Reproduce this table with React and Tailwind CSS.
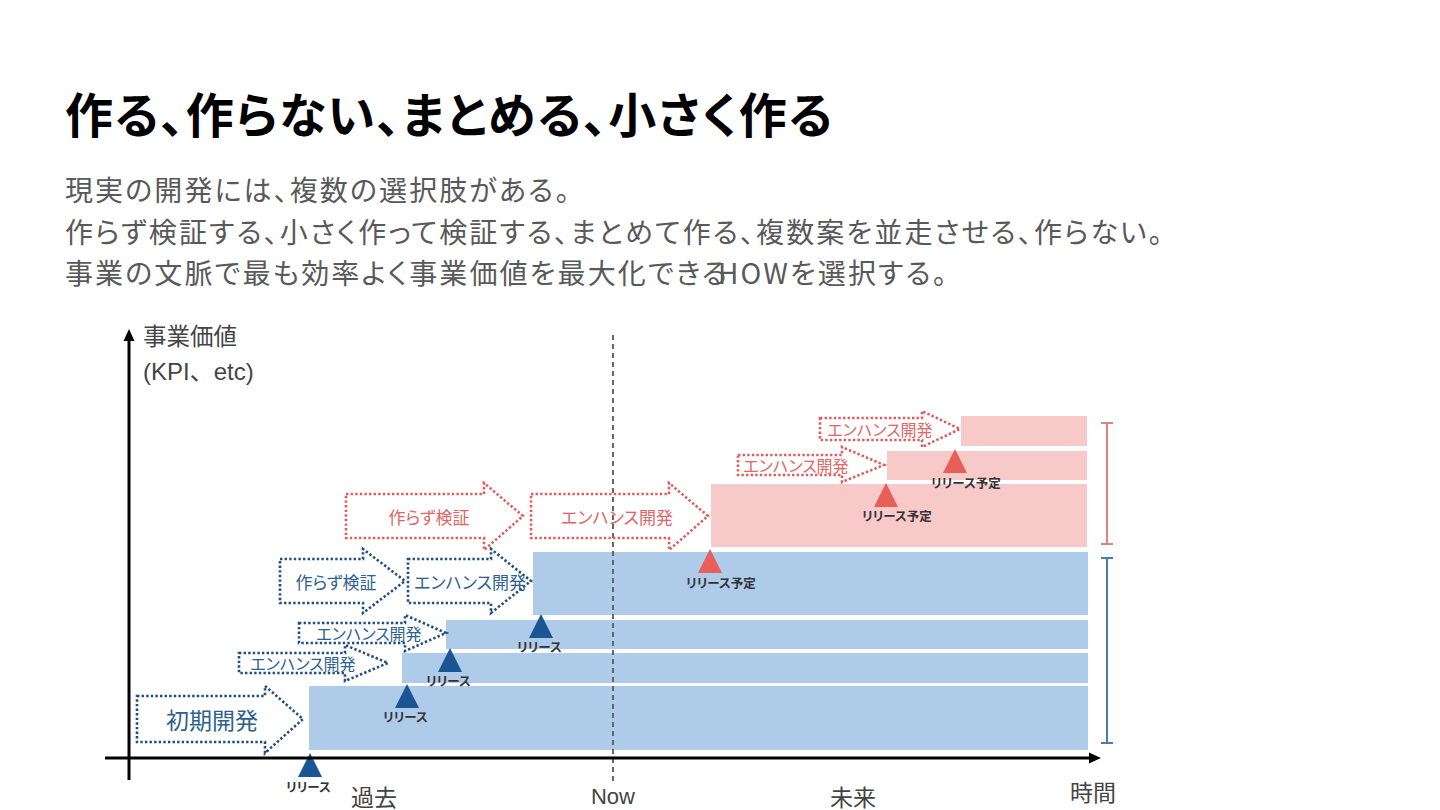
import React from "react";

const blue = "#1f4f80";
const blueText = "#2d5f90";
const red = "#e05c5c";
const redText = "#e06666";

const arrows = [
  { c: blue, t: blueText, x0: 137, bt: 696, bb: 742, hx: 265, ht: 686, hb: 753, tip: 303, cy: 719, tx: 212, label: "初期開発", fs: 23 },
  { c: blue, t: blueText, x0: 239, bt: 653, bb: 673, hx: 345, ht: 645, hb: 681, tip: 388, cy: 663, tx: 303, label: "エンハンス開発", fs: 16 },
  { c: blue, t: blueText, x0: 299, bt: 623, bb: 643, hx: 405, ht: 615, hb: 651, tip: 446, cy: 633, tx: 369, label: "エンハンス開発", fs: 16 },
  { c: blue, t: blueText, x0: 280, bt: 559, bb: 603, hx: 363, ht: 549, hb: 613, tip: 405, cy: 581, tx: 336, label: "作らず検証", fs: 17 },
  { c: blue, t: blueText, x0: 408, bt: 559, bb: 603, hx: 491, ht: 549, hb: 613, tip: 531, cy: 581, tx: 470, label: "エンハンス開発", fs: 17 },
  { c: red, t: redText, x0: 346, bt: 494, bb: 538, hx: 484, ht: 483, hb: 550, tip: 523, cy: 516, tx: 429, label: "作らず検証", fs: 17 },
  { c: red, t: redText, x0: 531, bt: 494, bb: 538, hx: 669, ht: 483, hb: 550, tip: 708, cy: 516, tx: 617, label: "エンハンス開発", fs: 17 },
  { c: red, t: redText, x0: 738, bt: 455, bb: 475, hx: 842, ht: 447, hb: 482, tip: 884, cy: 465, tx: 796, label: "エンハンス開発", fs: 16 },
  { c: red, t: redText, x0: 820, bt: 418, bb: 440, hx: 922, ht: 411, hb: 447, tip: 960, cy: 429, tx: 880, label: "エンハンス開発", fs: 16 },
];

const bars = [
  { x: 309, y: 686, w: 779, h: 64, f: "#afcbea" },
  { x: 402, y: 653, w: 686, h: 30, f: "#afcbea" },
  { x: 446, y: 620, w: 642, h: 29, f: "#afcbea" },
  { x: 533, y: 552, w: 555, h: 63, f: "#afcbea" },
  { x: 711, y: 484, w: 376, h: 63, f: "#f7c9c9" },
  { x: 887, y: 451, w: 200, h: 29, f: "#f7c9c9" },
  { x: 961, y: 416, w: 126, h: 30, f: "#f7c9c9" },
];

const tris = [
  { x: 310, y: 753, c: "#1b5593", label: "リリース", ly: 786 },
  { x: 407, y: 684, c: "#1b5593", label: "リリース", ly: 716 },
  { x: 450, y: 648, c: "#1b5593", label: "リリース", ly: 680 },
  { x: 541, y: 614, c: "#1b5593", label: "リリース", ly: 646 },
  { x: 710, y: 549, c: "#e85e58", label: "リリース予定", ly: 582 },
  { x: 886, y: 483, c: "#e85e58", label: "リリース予定", ly: 515 },
  { x: 955, y: 449, c: "#e85e58", label: "リリース予定", ly: 482 },
];

function Chart() {
  return (
    <svg
      className="block mt-[6.5px] [font-feature-settings:'palt']"
      width="1440"
      height="510"
      viewBox="0 300 1440 510"
    >
      {bars.map((b, i) => (
        <rect key={i} x={b.x} y={b.y} width={b.w} height={b.h} fill={b.f} />
      ))}

      {/* Now dashed line */}
      <line x1="613" y1="335" x2="613" y2="782" stroke="#666" strokeWidth="2" strokeDasharray="5 4" />

      {/* brackets */}
      <g stroke="#e58080" strokeWidth="2">
        <line x1="1107" y1="423" x2="1107" y2="544" />
        <line x1="1101" y1="423" x2="1113" y2="423" />
        <line x1="1101" y1="544" x2="1113" y2="544" />
      </g>
      <g stroke="#4c7cab" strokeWidth="2">
        <line x1="1107" y1="558" x2="1107" y2="743" />
        <line x1="1101" y1="558" x2="1113" y2="558" />
        <line x1="1101" y1="743" x2="1113" y2="743" />
      </g>

      {arrows.map((a, i) => (
        <g key={i}>
          <path
            d={`M${a.x0},${a.bt} L${a.hx},${a.bt} L${a.hx},${a.ht} L${a.tip},${a.cy} L${a.hx},${a.hb} L${a.hx},${a.bb} L${a.x0},${a.bb} Z`}
            fill="none"
            stroke={a.c}
            strokeWidth="2.6"
            strokeDasharray="2.4 2.2"
          />
          <text x={a.tx} y={a.cy} textAnchor="middle" dominantBaseline="central" fontSize={a.fs} fill={a.t}>
            {a.label}
          </text>
        </g>
      ))}

      {tris.map((t, i) => (
        <g key={i}>
          <polygon points={`${t.x},${t.y} ${t.x + 12},${t.y + 24} ${t.x - 12},${t.y + 24}`} fill={t.c} />
          <text x={t.x - 24} y={t.ly} dominantBaseline="central" fontSize="12.5" fontWeight="700" fill="#333">
            {t.label}
          </text>
        </g>
      ))}

      {/* axes */}
      <line x1="129" y1="338" x2="129" y2="780" stroke="#000" strokeWidth="3" />
      <polygon points="129,329 134.5,341 123.5,341" fill="#000" />
      <line x1="105" y1="758" x2="1090" y2="758" stroke="#000" strokeWidth="3" />
      <polygon points="1101,758 1089,752.5 1089,763.5" fill="#000" />

      {/* axis labels */}
      <text x="143" y="335" dominantBaseline="central" fontSize="23.5" fill="#444">事業価値</text>
      <text
        x="143"
        y="371"
        dominantBaseline="central"
        fontSize="24"
        fill="#444"
        className="font-['Liberation_Sans','Noto_Sans_CJK_JP',sans-serif] [font-feature-settings:normal]"
      >
        (KPI、etc)
      </text>
      <text x="374" y="796" textAnchor="middle" dominantBaseline="central" fontSize="23" fill="#444">過去</text>
      <text x="613" y="796" textAnchor="middle" dominantBaseline="central" fontSize="22" fill="#444" className="font-['Liberation_Sans',sans-serif]">
        Now
      </text>
      <text x="853" y="796" textAnchor="middle" dominantBaseline="central" fontSize="23" fill="#444">未来</text>
      <text x="1093" y="791" textAnchor="middle" dominantBaseline="central" fontSize="23" fill="#444">時間</text>
    </svg>
  );
}

export default function App() {
  return (
    <div className="w-[1440px] h-[810px] bg-white overflow-hidden font-['Noto_Sans_CJK_JP','Noto_Sans',sans-serif]">
      <div className="pl-[65px] pt-[85px] [font-feature-settings:'palt']">
        <h1 className="text-[48px] leading-[54px] font-bold tracking-[1.5px] text-black">作る、作らない、まとめる、小さく作る</h1>
        <div className="mt-[30px] text-[28px] leading-[41.5px] tracking-[2.1px] text-[#595959]">
          <p>現実の開発には、複数の選択肢がある。</p>
          <p>作らず検証する、小さく作って検証する、まとめて作る、複数案を並走させる、作らない。</p>
          <p>
            事業の文脈で最も効率よく事業価値を最大化できる<span className="-ml-[11px]">HOW</span>を選択する。
          </p>
        </div>
      </div>
      <Chart />
    </div>
  );
}
